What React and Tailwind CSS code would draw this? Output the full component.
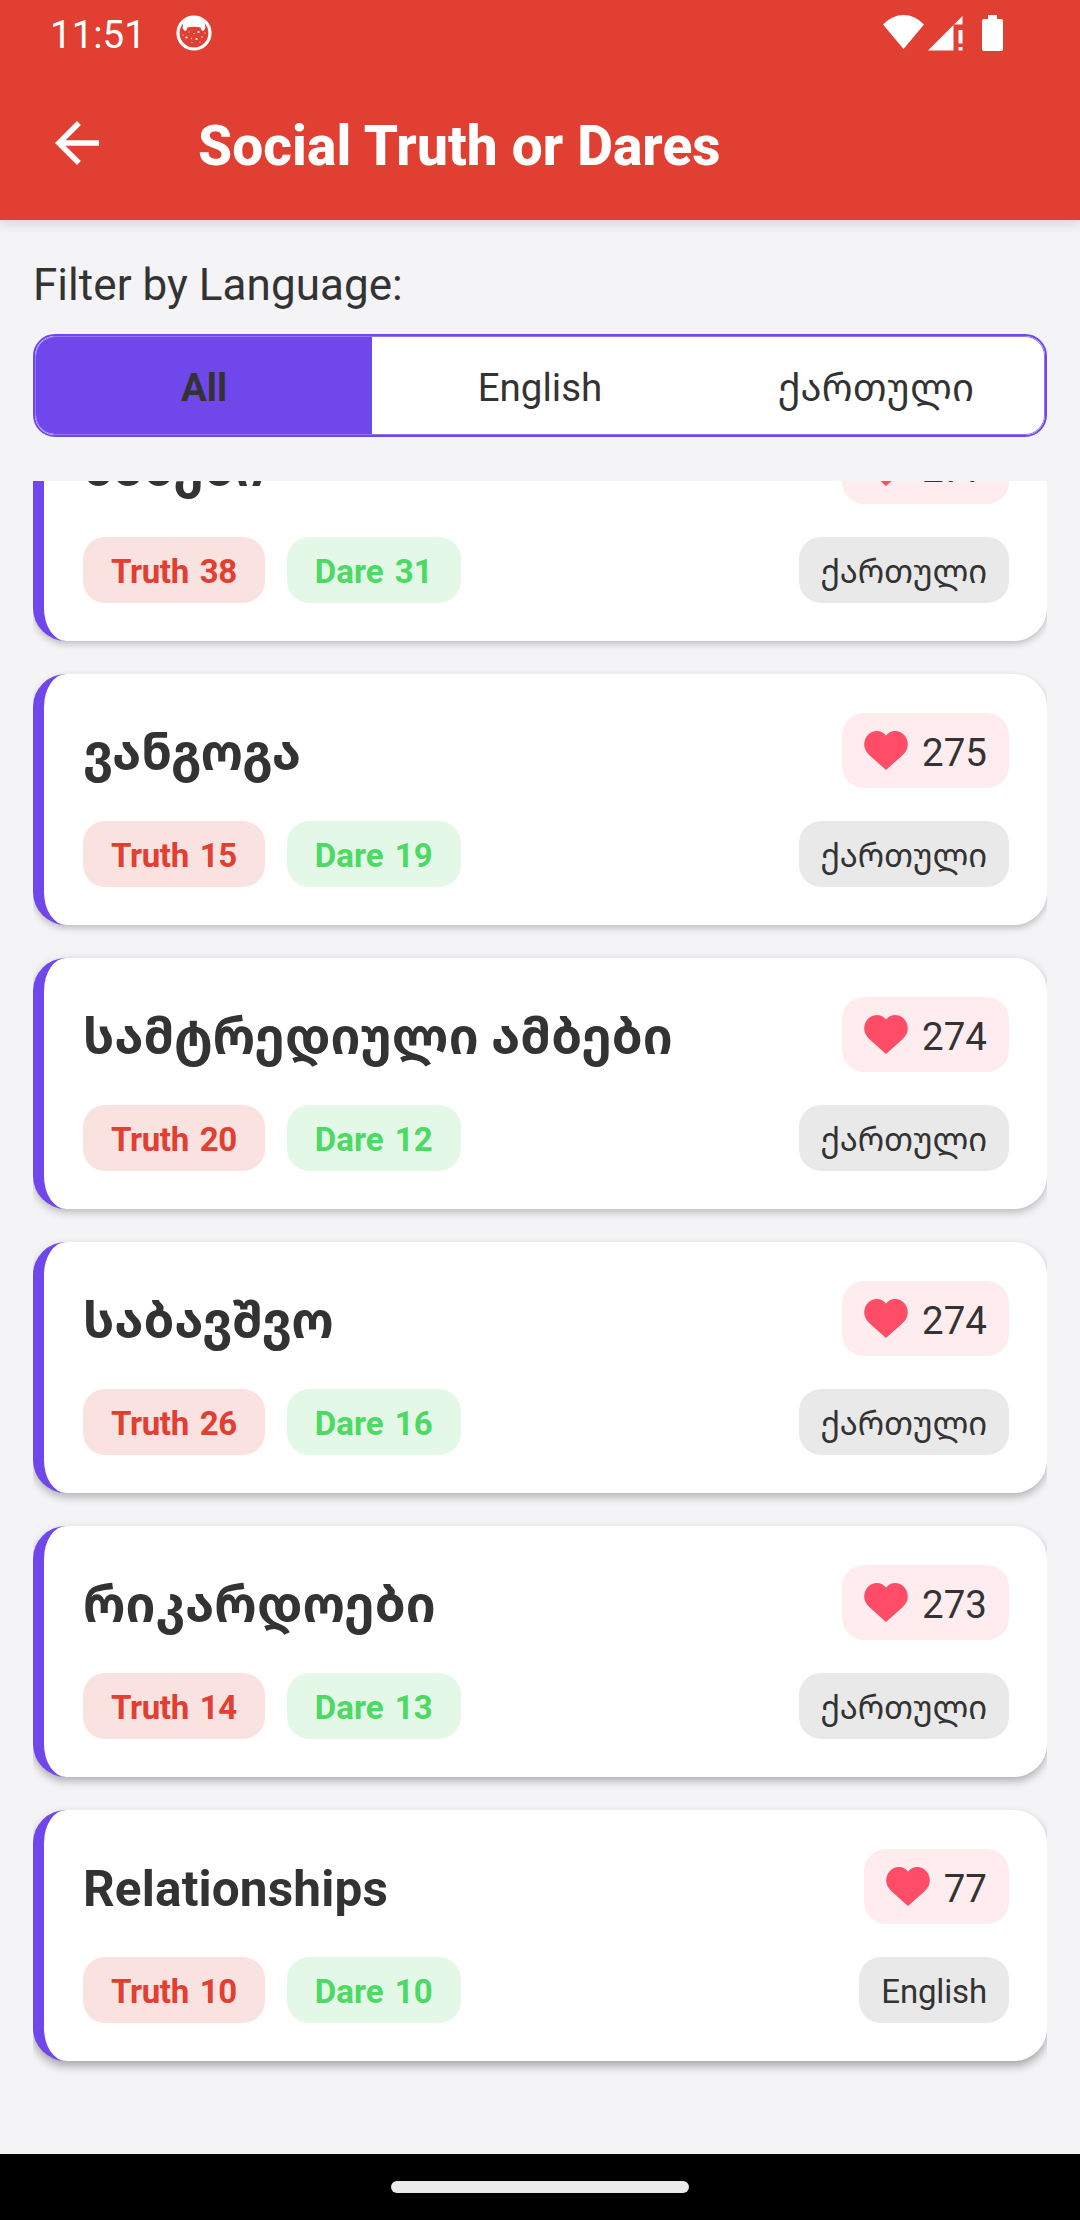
import { MdArrowBack } from 'react-icons/md';

const DECKS = [
  { name: 'ბაბები', likes: 277, truth: 38, dare: 31, lang: 'ka' },
  { name: 'ვანგოგა', likes: 275, truth: 15, dare: 19, lang: 'ka' },
  { name: 'სამტრედიული ამბები', likes: 274, truth: 20, dare: 12, lang: 'ka' },
  { name: 'საბავშვო', likes: 274, truth: 26, dare: 16, lang: 'ka' },
  { name: 'რიკარდოები', likes: 273, truth: 14, dare: 13, lang: 'ka' },
  { name: 'Relationships', likes: 77, truth: 10, dare: 10, lang: 'en' },
];

// Elevation shadow, a little stronger for cards further down the screen
const SHADOWS = [
  'shadow-[0_3px_7px_rgba(0,0,0,0.22)]',
  'shadow-[0_3px_7px_rgba(0,0,0,0.23)]',
  'shadow-[0_3px_8px_rgba(0,0,0,0.25)]',
  'shadow-[0_4px_8px_rgba(0,0,0,0.27)]',
  'shadow-[0_4px_9px_rgba(0,0,0,0.29)]',
  'shadow-[0_5px_10px_rgba(0,0,0,0.32)]',
];

function StatusBar() {
  return (
    <div className="flex h-[66px] items-center pl-[50px] pr-[77px] text-white">
      <span className="pt-[2px] text-[38.5px] leading-[45px]">11:51</span>
      <svg viewBox="0 0 36 36" className="ml-[30px] h-9 w-9" fill="none">
        <circle cx="18" cy="18" r="16" stroke="#fff" strokeWidth="3.200" />
        <path
          d="M7.500 6 18 1l10.500 5 1 7-2 3-2-.8-.9-2.700q-6.600-1.500-13.200 0l-.9 2.700-2 .8-2-3z"
          fill="#fff"
        />
        <g fill="#fff">
          <circle cx="22.500" cy="17" r="1.100" />
          <circle cx="10.500" cy="22.500" r="1.100" />
          <circle cx="20.500" cy="24" r="1.100" />
          <circle cx="15.500" cy="23.500" r=".7" />
          <circle cx="13" cy="17" r=".6" />
          <circle cx="18" cy="18.500" r=".6" />
          <circle cx="26" cy="22" r=".7" />
          <circle cx="7" cy="20" r=".6" />
          <circle cx="29" cy="18" r=".6" />
          <circle cx="16" cy="27.500" r=".6" />
          <circle cx="24" cy="27" r=".6" />
        </g>
      </svg>

      <svg viewBox="0 0 41 34" className="mb-[2px] ml-auto h-[34px] w-[41px]">
        <path d="M0 9.500Q9 0 20.500 0T41 9.500L20.500 34z" fill="#fff" />
      </svg>
      <svg viewBox="0 0 35 35" className="ml-1 h-[35px] w-[35px]">
        <path
          d="M0 34.500 25.500 9v25.500zM34.500 0v8.500h-8.500zM30.500 14h4v13.500h-4zM30.500 31h4v3.500h-4z"
          fill="#fff"
        />
      </svg>
      <svg viewBox="0 0 21 36" className="ml-[19px] h-9 w-[21px]">
        <path
          d="M6 0h9v4h4a2 2 0 0 1 2 2v28a2 2 0 0 1-2 2H2a2 2 0 0 1-2-2V6a2 2 0 0 1 2-2h4z"
          fill="#fff"
        />
      </svg>
    </div>
  );
}

function Header() {
  return (
    <header className="relative z-10 h-[220px] shrink-0 bg-[#e13f31] shadow-[0_4px_11px_rgba(0,0,0,0.13)]">
      <StatusBar />
      <div className="flex h-[154px] items-center pl-11">
        <MdArrowBack className="h-[66px] w-[66px] text-white" />
        <h1 className="ml-[88px] mt-[5px] text-[55px] leading-[64px] font-extrabold tracking-[0.1px] text-white">
          Social Truth or Dares
        </h1>
      </div>
    </header>
  );
}

function LanguageFilter() {
  return (
    <section className="px-[33px] pt-[39px]">
      <p className="text-[44px] leading-[52px] tracking-[0.04px]">
        Filter by Language:
      </p>
      <div className="mt-[23px] h-[103px] rounded-[22px] border-2 border-[#7047eb] bg-white">
        <div className="grid h-full grid-cols-3 overflow-hidden rounded-[20px] border border-[#9475f0] text-[38.5px]">
          <button className="bg-[#7047eb] pt-1 font-bold">All</button>
          <button className="pt-1">English</button>
          <button className="pt-1 tracking-[0.15px]">ქართული</button>
        </div>
      </div>
    </section>
  );
}

function Heart() {
  return (
    <svg viewBox="0 0 132 118" className="h-[39px] w-11">
      <path
        d="M66 118 16 73C6 64 0 54 0 41A38 41 0 0 1 38 0C50 0 60 6 66 14C72 6 82 0 94 0A38 41 0 0 1 132 41C132 54 126 64 116 73z"
        fill="#ff4d67"
      />
    </svg>
  );
}

function DeckCard({ deck, shadow }) {
  return (
    <article
      className={`flex h-[251px] shrink-0 flex-col justify-between rounded-[33px] border-l-[11px] border-[#7047eb] bg-white pt-[39px] pr-[38px] pb-[38px] pl-[39px] ${shadow}`}
    >
      <div className="flex h-[75px] items-center justify-between">
        <h2 className="pt-[5px] text-[49.5px] leading-[58px] font-bold tracking-[0.15px]">
          {deck.name}
        </h2>
        <div className="flex h-[75px] items-center rounded-[22px] bg-[#ffecee] px-[22px]">
          <Heart />
          <span className="ml-[14px] pt-1 text-[38.5px]">{deck.likes}</span>
        </div>
      </div>
      <div className="flex h-[66px] items-stretch text-[33px]">
        <span className="flex items-center rounded-[22px] bg-[#fae2e0] px-[28px] pt-[3px] font-bold tracking-[-0.35px] text-[#e13f31] [word-spacing:3px]">
          Truth {deck.truth}
        </span>
        <span className="ml-[22px] flex items-center rounded-[22px] bg-[#e4f8e8] px-[28px] pt-[3px] font-bold text-[#4cd964] [word-spacing:3px]">
          Dare {deck.dare}
        </span>
        <span className="ml-auto flex items-center rounded-[22px] bg-[#e9e9e9] px-[22px] pt-[3px] tracking-[-0.15px]">
          {deck.lang === 'ka' ? 'ქართული' : 'English'}
        </span>
      </div>
    </article>
  );
}

export default function App() {
  return (
    <div className="flex h-[2220px] w-[1080px] flex-col overflow-hidden bg-[#f4f4f7] font-[Roboto,'Noto_Sans_Georgian','DejaVu_Sans',sans-serif] text-[#333333]">
      <Header />
      <LanguageFilter />
      <main className="mx-[33px] mt-11 flex-1 overflow-hidden">
        <div className="-mt-[91px] flex flex-col gap-[33px]">
          {DECKS.map((deck, i) => (
            <DeckCard key={deck.name} deck={deck} shadow={SHADOWS[i]} />
          ))}
        </div>
      </main>
      <footer className="flex h-[66px] shrink-0 items-center justify-center bg-black">
        <div className="h-3 w-[298px] rounded-full bg-[#ebebeb]" />
      </footer>
    </div>
  );
}
